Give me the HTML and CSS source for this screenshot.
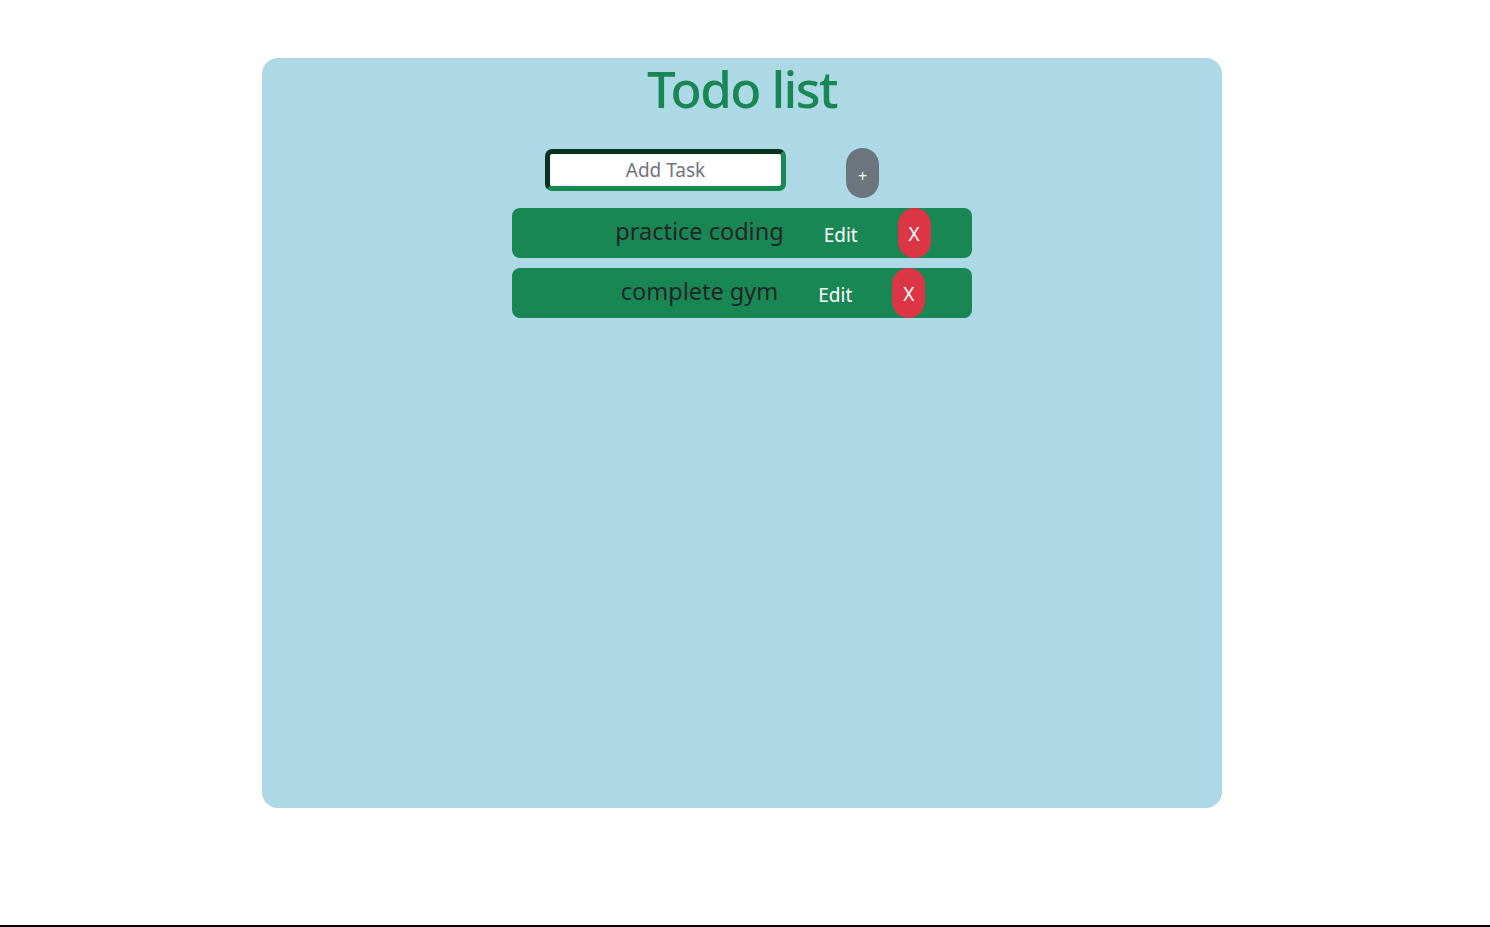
FILE: index.html
```html
<!DOCTYPE html>
<html lang="en">
<head>
<meta charset="utf-8">
<title>Todo list</title>
<link rel="stylesheet" href="styles.css">
</head>
<body>
<div class="page">
  <main class="card">
    <h1 class="title">Todo list</h1>
    <div class="add-row">
      <input class="task-input" type="text" placeholder="Add Task">
      <button class="add-btn">+</button>
    </div>
    <ul class="tasks">
      <li class="task">
        <span class="task-text">practice coding</span>
        <button class="edit-btn">Edit</button>
        <button class="del-btn">X</button>
      </li>
      <li class="task">
        <span class="task-text">complete gym</span>
        <button class="edit-btn">Edit</button>
        <button class="del-btn">X</button>
      </li>
    </ul>
  </main>
</div>
</body>
</html>
```

FILE: styles.css
```css
* { box-sizing: border-box; }
html, body { margin: 0; padding: 0; }
body {
  font-family: "Noto Sans", "Open Sans", sans-serif;
  color: #212529;
  background: #fff;
}
.page {
  min-height: 100vh;
  border-bottom: 2px solid #000;
  padding-top: 58px;
}
.card {
  width: 960px;
  height: 750px;
  margin-left: 262px;
  background: #add8e6;
  border-radius: 16px;
  display: flex;
  flex-direction: column;
  align-items: center;
}
.title {
  margin: 0;
  font-size: 51px;
  font-weight: 500;
  letter-spacing: -1.6px;
  line-height: 60px;
  color: #198754;
}
.add-row {
  display: flex;
  align-items: flex-start;
  gap: 60px;
  margin-top: 30px;
  padding-right: 60px;
}
.task-input {
  width: 241px;
  height: 42px;
  margin-top: 1px;
  border: 5px solid #198754;
  border-top-color: #06331f;
  border-left-color: #06331f;
  border-radius: 7px;
  background: #fff;
  font-family: inherit;
  font-size: 19px;
  text-align: center;
  padding: 0 6px 0;
  outline: none;
}
.task-input::placeholder { color: #6c757d; }
.add-btn {
  width: 33px;
  height: 50px;
  border: none;
  border-radius: 17px;
  background: #6c757d;
  color: #fff;
  font-family: inherit;
  font-size: 16px;
  padding: 6px 0 0;
}
.tasks {
  list-style: none;
  margin: 10px 0 0;
  padding: 0;
  display: flex;
  flex-direction: column;
  gap: 10px;
}
.task {
  width: 460px;
  height: 50px;
  background: #198754;
  border-radius: 8px;
  display: flex;
  align-items: center;
  justify-content: center;
  padding-left: 62px;
}
.task-text {
  font-size: 23.5px;
  color: #212529;
  margin-top: -5px;
}
.edit-btn {
  border: none;
  background: transparent;
  color: #fff;
  font-family: inherit;
  font-size: 19px;
  padding: 0;
  margin-top: 3px;
  margin-left: 40px;
}
.del-btn {
  width: 33px;
  height: 50px;
  border: none;
  border-radius: 17px;
  background: #dc3545;
  color: #fff;
  font-family: inherit;
  font-size: 19px;
  padding: 2px 0 0;
  margin-left: 40px;
}
```
